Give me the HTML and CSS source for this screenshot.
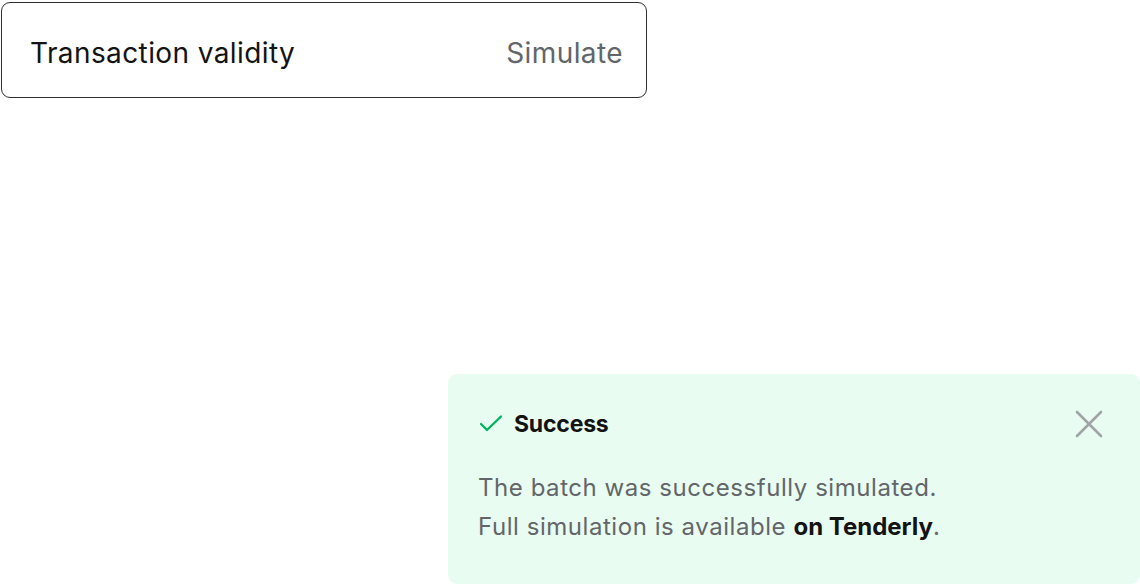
FILE: index.html
```html
<!DOCTYPE html>
<html>
<head>
<meta charset="utf-8">
<link rel="stylesheet" href="styles.css">
</head>
<body>
<div class="page">
  <div class="validity">
    <span class="label">Transaction validity</span>
    <span class="action">Simulate</span>
  </div>
  <div class="toast">
    <div class="toast-head">
      <svg class="check" width="24" height="24" viewBox="0 0 24 24"><path d="M2 12 L8 18 L22 4.5" fill="none" stroke="#00b460" stroke-width="2.4" stroke-linecap="round" stroke-linejoin="round"/></svg>
      <span class="title">Success</span>
      <svg class="close" width="28" height="28" viewBox="0 0 28 28"><path d="M2 2 L26 26 M26 2 L2 26" fill="none" stroke="#a1a3a7" stroke-width="2.6" stroke-linecap="round"/></svg>
    </div>
    <p class="msg">The batch was successfully simulated.<br>Full simulation is available <b>on Tenderly</b>.</p>
  </div>
</div>
</body>
</html>
```
FILE: styles.css
```css
html, body { margin: 0; padding: 0; background: #fff; }
body { font-family: "Inter", "Noto Sans", sans-serif; }
.page { width: 1140px; height: 586px; position: relative; overflow: hidden; }
.validity {
  margin: 2px 0 0 1px;
  width: 646px;
  height: 96px;
  box-sizing: border-box;
  border: 1.6px solid #303033;
  border-radius: 9px;
  display: flex;
  align-items: center;
  justify-content: space-between;
  padding: 5px 23px 0 28px;
  font-size: 28px;
  letter-spacing: 0.4px;
}
.label { color: #121312; }
.action { color: #636669; }
.toast {
  position: absolute;
  left: 448px;
  top: 374px;
  width: 692px;
  height: 210px;
  box-sizing: border-box;
  background: #e9fcf1;
  border-radius: 9px;
  padding: 37px 37px 0 30px;
}
.toast-head { display: flex; align-items: center; height: 26px; }
.check { margin-left: 1px; margin-right: 11px; }
.title { font-weight: 700; font-size: 23px; letter-spacing: -0.2px; color: #121312; flex: 1; }
.close { margin-top: 0; }
.msg { margin: 31px 0 0 0; font-size: 24px; letter-spacing: 0.55px; line-height: 39px; color: #636669; }
.msg b { color: #121312; font-weight: 700; letter-spacing: 0; }
```
